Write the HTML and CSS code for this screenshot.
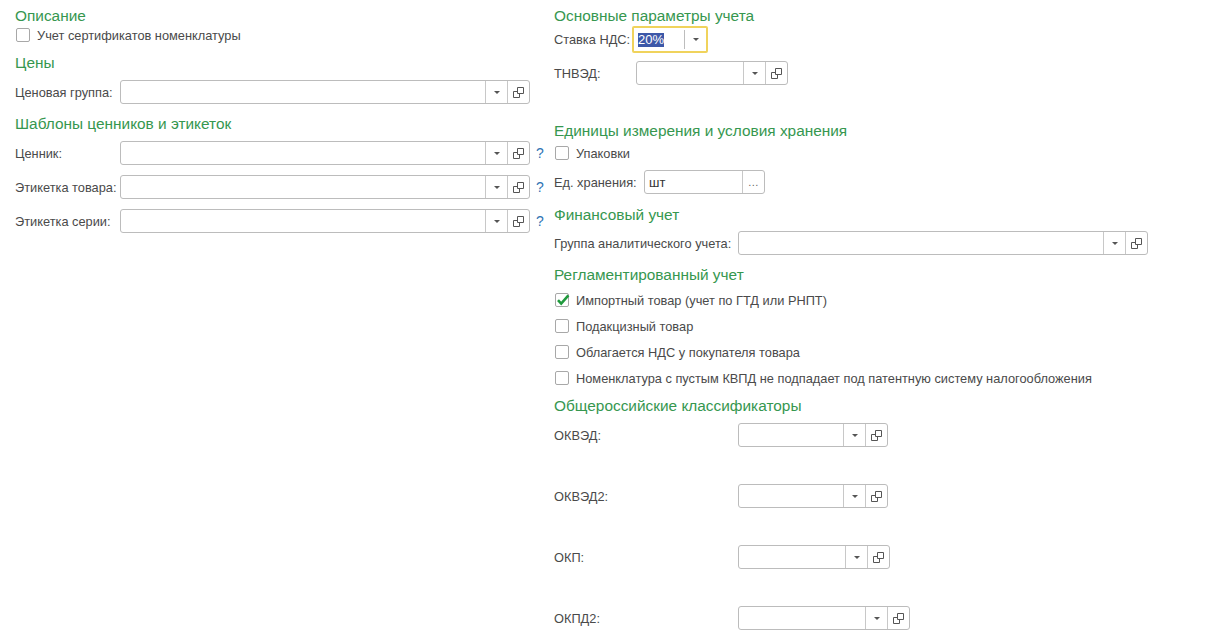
FILE: index.html
```html
<!DOCTYPE html>
<html lang="ru">
<head>
    <meta charset="UTF-8">
    <title>Номенклатура</title>
    <link rel="stylesheet" href="styles.css">
</head>
<body>
    <div class="form">
        <div class="col col-left">
            <div class="group-title">Описание</div>
            <label class="check-row">
                <span class="checkbox"></span>
                <span>Учет сертификатов номенклатуры</span>
            </label>

            <div class="group-title gap-9">Цены</div>
            <div class="field-row gap-8">
                <span class="label label-left">Ценовая группа:</span>
                <div class="field field-left">
                    <span class="field-input"></span>
                    <span class="btn btn-drop"><i class="arrow"></i></span>
                    <span class="btn btn-open"><svg width="11" height="11" viewBox="0 0 11 11"><path d="M4.5 0.5h6v6h-6z M0.5 4.5h4 M0.5 4.5v6h6v-4" fill="none" stroke="#555" stroke-width="1"/></svg></span>
                </div>
            </div>

            <div class="group-title gap-11">Шаблоны ценников и этикеток</div>
            <div class="field-row gap-8">
                <span class="label label-left">Ценник:</span>
                <div class="field field-left">
                    <span class="field-input"></span>
                    <span class="btn btn-drop"><i class="arrow"></i></span>
                    <span class="btn btn-open"><svg width="11" height="11" viewBox="0 0 11 11"><path d="M4.5 0.5h6v6h-6z M0.5 4.5h4 M0.5 4.5v6h6v-4" fill="none" stroke="#555" stroke-width="1"/></svg></span>
                </div>
                <span class="help">?</span>
            </div>
            <div class="field-row gap-10">
                <span class="label label-left">Этикетка товара:</span>
                <div class="field field-left">
                    <span class="field-input"></span>
                    <span class="btn btn-drop"><i class="arrow"></i></span>
                    <span class="btn btn-open"><svg width="11" height="11" viewBox="0 0 11 11"><path d="M4.5 0.5h6v6h-6z M0.5 4.5h4 M0.5 4.5v6h6v-4" fill="none" stroke="#555" stroke-width="1"/></svg></span>
                </div>
                <span class="help">?</span>
            </div>
            <div class="field-row gap-10">
                <span class="label label-left">Этикетка серии:</span>
                <div class="field field-left">
                    <span class="field-input"></span>
                    <span class="btn btn-drop"><i class="arrow"></i></span>
                    <span class="btn btn-open"><svg width="11" height="11" viewBox="0 0 11 11"><path d="M4.5 0.5h6v6h-6z M0.5 4.5h4 M0.5 4.5v6h6v-4" fill="none" stroke="#555" stroke-width="1"/></svg></span>
                </div>
                <span class="help">?</span>
            </div>
        </div>

        <div class="col col-right">
            <div class="group-title">Основные параметры учета</div>
            <div class="field-row vat-row">
                <span class="label label-vat">Ставка НДС:</span>
                <div class="field field-vat focused">
                    <span class="field-input"><span class="selected">20%</span></span>
                    <span class="btn btn-drop"><i class="arrow"></i></span>
                </div>
            </div>
            <div class="field-row gap-8">
                <span class="label label-tnved">ТНВЭД:</span>
                <div class="field field-tnved">
                    <span class="field-input"></span>
                    <span class="btn btn-drop"><i class="arrow"></i></span>
                    <span class="btn btn-open"><svg width="11" height="11" viewBox="0 0 11 11"><path d="M4.5 0.5h6v6h-6z M0.5 4.5h4 M0.5 4.5v6h6v-4" fill="none" stroke="#555" stroke-width="1"/></svg></span>
                </div>
            </div>

            <div class="group-title gap-37">Единицы измерения и условия хранения</div>
            <label class="check-row gap-3">
                <span class="checkbox"></span>
                <span>Упаковки</span>
            </label>
            <div class="field-row gap-7">
                <span class="label label-unit">Ед. хранения:</span>
                <div class="field field-unit">
                    <span class="field-input">шт</span>
                    <span class="btn btn-more">...</span>
                </div>
            </div>

            <div class="group-title gap-12">Финансовый учет</div>
            <div class="field-row gap-7">
                <span class="label label-wide">Группа аналитического учета:</span>
                <div class="field field-left">
                    <span class="field-input"></span>
                    <span class="btn btn-drop"><i class="arrow"></i></span>
                    <span class="btn btn-open"><svg width="11" height="11" viewBox="0 0 11 11"><path d="M4.5 0.5h6v6h-6z M0.5 4.5h4 M0.5 4.5v6h6v-4" fill="none" stroke="#555" stroke-width="1"/></svg></span>
                </div>
            </div>

            <div class="group-title gap-11">Регламентированный учет</div>
            <label class="check-row gap-6">
                <span class="checkbox checked"><svg width="14" height="12" viewBox="0 0 14 12"><path d="M2 6.2l3.2 3.4L12.4 1.4" fill="none" stroke="#1f9a3d" stroke-width="2.6"/></svg></span>
                <span>Импортный товар (учет по ГТД или РНПТ)</span>
            </label>
            <label class="check-row gap-6">
                <span class="checkbox"></span>
                <span>Подакцизный товар</span>
            </label>
            <label class="check-row gap-6">
                <span class="checkbox"></span>
                <span>Облагается НДС у покупателя товара</span>
            </label>
            <label class="check-row gap-6">
                <span class="checkbox"></span>
                <span>Номенклатура с пустым КВПД не подпадает под патентную систему налогообложения</span>
            </label>

            <div class="group-title gap-9">Общероссийские классификаторы</div>
            <div class="field-row gap-8">
                <span class="label label-wide">ОКВЭД:</span>
                <div class="field field-okved">
                    <span class="field-input"></span>
                    <span class="btn btn-drop"><i class="arrow"></i></span>
                    <span class="btn btn-open"><svg width="11" height="11" viewBox="0 0 11 11"><path d="M4.5 0.5h6v6h-6z M0.5 4.5h4 M0.5 4.5v6h6v-4" fill="none" stroke="#555" stroke-width="1"/></svg></span>
                </div>
            </div>
            <div class="field-row gap-37">
                <span class="label label-wide">ОКВЭД2:</span>
                <div class="field field-okved">
                    <span class="field-input"></span>
                    <span class="btn btn-drop"><i class="arrow"></i></span>
                    <span class="btn btn-open"><svg width="11" height="11" viewBox="0 0 11 11"><path d="M4.5 0.5h6v6h-6z M0.5 4.5h4 M0.5 4.5v6h6v-4" fill="none" stroke="#555" stroke-width="1"/></svg></span>
                </div>
            </div>
            <div class="field-row gap-37">
                <span class="label label-wide">ОКП:</span>
                <div class="field field-okp">
                    <span class="field-input"></span>
                    <span class="btn btn-drop"><i class="arrow"></i></span>
                    <span class="btn btn-open"><svg width="11" height="11" viewBox="0 0 11 11"><path d="M4.5 0.5h6v6h-6z M0.5 4.5h4 M0.5 4.5v6h6v-4" fill="none" stroke="#555" stroke-width="1"/></svg></span>
                </div>
            </div>
            <div class="field-row gap-37">
                <span class="label label-wide">ОКПД2:</span>
                <div class="field field-okpd">
                    <span class="field-input"></span>
                    <span class="btn btn-drop"><i class="arrow"></i></span>
                    <span class="btn btn-open"><svg width="11" height="11" viewBox="0 0 11 11"><path d="M4.5 0.5h6v6h-6z M0.5 4.5h4 M0.5 4.5v6h6v-4" fill="none" stroke="#555" stroke-width="1"/></svg></span>
                </div>
            </div>
        </div>
    </div>
</body>
</html>
```

FILE: styles.css
```css
body {
    font-family: "Liberation Sans", Arial, sans-serif;
    font-size: 12.8px;
    color: #4a4a4a;
    margin: 0;
    padding: 0;
    background-color: #fff;
    overflow: hidden;
}

.form {
    display: flex;
    padding-top: 7px;
}

.col-left {
    width: 539px;
    padding-left: 15px;
}

.col-right {
    flex: 1;
}

/* Group headers */
.group-title {
    font-size: 15.4px;
    line-height: 18px;
    color: #36974f;
}

/* Spacing helpers */
.gap-3 { margin-top: 3px; }
.gap-6 { margin-top: 6px; }
.gap-7 { margin-top: 7px; }
.gap-8 { margin-top: 8px; }
.gap-9 { margin-top: 9px; }
.gap-10 { margin-top: 10px; }
.gap-11 { margin-top: 11px; }
.gap-12 { margin-top: 12px; }
.gap-37 { margin-top: 37px; }

/* Checkboxes */
.check-row {
    display: flex;
    align-items: center;
    height: 20px;
    gap: 7px;
    padding-left: 1px;
}

.checkbox {
    width: 14px;
    height: 14px;
    box-sizing: border-box;
    border: 1px solid #a8a8a8;
    border-radius: 2px;
    background-color: #fff;
    position: relative;
}

.checkbox.checked svg {
    position: absolute;
    left: 0;
    top: 0;
}

/* Input rows */
.field-row {
    display: flex;
    align-items: center;
    height: 24px;
}

.label {
    flex-shrink: 0;
    white-space: nowrap;
}

.label-left { width: 105px; }
.label-vat { width: 78px; }
.label-tnved { width: 82px; }
.label-unit { width: 90px; }
.label-wide { width: 184px; }

.field {
    display: flex;
    height: 24px;
    box-sizing: border-box;
    border: 1px solid #bcbcbc;
    border-radius: 3px;
    background-color: #fff;
}

.field-left { width: 410px; }
.field-tnved { width: 152px; }
.field-unit { width: 121px; }
.field-okved { width: 150px; }
.field-okp { width: 152px; }
.field-okpd { width: 172px; }

.field-input {
    flex: 1;
    display: flex;
    align-items: center;
    padding-left: 4px;
    color: #333;
    font-size: 13px;
}

.btn {
    width: 21px;
    flex-shrink: 0;
    display: flex;
    align-items: center;
    justify-content: center;
    border-left: 1px solid #c8c8c8;
}

.arrow {
    width: 0;
    height: 0;
    border-left: 3px solid transparent;
    border-right: 3px solid transparent;
    border-top: 3px solid #555;
}

.btn-more {
    font-size: 11px;
    color: #666;
    letter-spacing: 0.5px;
}

.help {
    margin-left: 6px;
    color: #2f74b4;
    font-size: 14px;
}

/* Focused VAT field */
.vat-row {
    height: 27px;
    margin-top: 1px;
}

.field-vat {
    width: 76px;
    height: 27px;
    border: 2px solid #f0d35c;
    border-radius: 2px;
}

.field-vat .field-input {
    padding-left: 4px;
}

.field-vat .btn {
    margin: 2px 0;
    border-left-color: #bdbdbd;
}

.selected {
    background-color: #3d58a8;
    color: #fff;
    line-height: 14px;
}
```
